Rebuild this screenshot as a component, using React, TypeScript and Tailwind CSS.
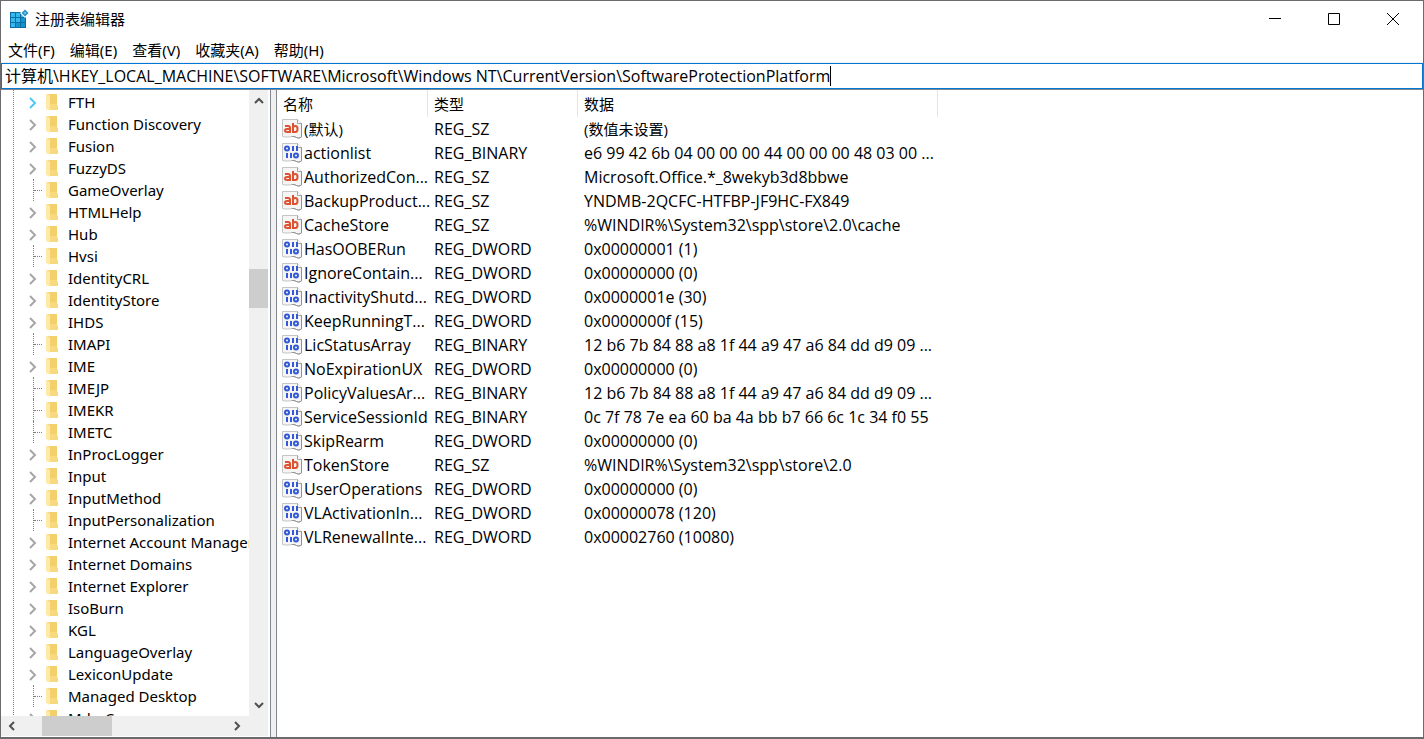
import clsx from "clsx";

type RegKey = { name: string; leaf?: boolean; active?: boolean };
type RegValue = { name: string; type: string; data: string };

const menus = ["文件(F)", "编辑(E)", "查看(V)", "收藏夹(A)", "帮助(H)"];

const keys: RegKey[] = [
  { name: "FTH", active: true },
  { name: "Function Discovery" },
  { name: "Fusion" },
  { name: "FuzzyDS" },
  { name: "GameOverlay", leaf: true },
  { name: "HTMLHelp" },
  { name: "Hub" },
  { name: "Hvsi", leaf: true },
  { name: "IdentityCRL" },
  { name: "IdentityStore" },
  { name: "IHDS" },
  { name: "IMAPI", leaf: true },
  { name: "IME" },
  { name: "IMEJP", leaf: true },
  { name: "IMEKR", leaf: true },
  { name: "IMETC", leaf: true },
  { name: "InProcLogger" },
  { name: "Input" },
  { name: "InputMethod" },
  { name: "InputPersonalization", leaf: true },
  { name: "Internet Account Manager" },
  { name: "Internet Domains" },
  { name: "Internet Explorer" },
  { name: "IsoBurn" },
  { name: "KGL" },
  { name: "LanguageOverlay" },
  { name: "LexiconUpdate" },
  { name: "Managed Desktop", leaf: true },
  { name: "MdmCommon" },
];

const values: RegValue[] = [
  { name: "(默认)", type: "REG_SZ", data: "(数值未设置)" },
  { name: "actionlist", type: "REG_BINARY", data: "e6 99 42 6b 04 00 00 00 44 00 00 00 48 03 00 ..." },
  { name: "AuthorizedCon...", type: "REG_SZ", data: "Microsoft.Office.*_8wekyb3d8bbwe" },
  { name: "BackupProduct...", type: "REG_SZ", data: "YNDMB-2QCFC-HTFBP-JF9HC-FX849" },
  { name: "CacheStore", type: "REG_SZ", data: "%WINDIR%\\System32\\spp\\store\\2.0\\cache" },
  { name: "HasOOBERun", type: "REG_DWORD", data: "0x00000001 (1)" },
  { name: "IgnoreContain...", type: "REG_DWORD", data: "0x00000000 (0)" },
  { name: "InactivityShutd...", type: "REG_DWORD", data: "0x0000001e (30)" },
  { name: "KeepRunningT...", type: "REG_DWORD", data: "0x0000000f (15)" },
  { name: "LicStatusArray", type: "REG_BINARY", data: "12 b6 7b 84 88 a8 1f 44 a9 47 a6 84 dd d9 09 ..." },
  { name: "NoExpirationUX", type: "REG_DWORD", data: "0x00000000 (0)" },
  { name: "PolicyValuesAr...", type: "REG_BINARY", data: "12 b6 7b 84 88 a8 1f 44 a9 47 a6 84 dd d9 09 ..." },
  { name: "ServiceSessionId", type: "REG_BINARY", data: "0c 7f 78 7e ea 60 ba 4a bb b7 66 6c 1c 34 f0 55" },
  { name: "SkipRearm", type: "REG_DWORD", data: "0x00000000 (0)" },
  { name: "TokenStore", type: "REG_SZ", data: "%WINDIR%\\System32\\spp\\store\\2.0" },
  { name: "UserOperations", type: "REG_DWORD", data: "0x00000000 (0)" },
  { name: "VLActivationIn...", type: "REG_DWORD", data: "0x00000078 (120)" },
  { name: "VLRenewalInte...", type: "REG_DWORD", data: "0x00002760 (10080)" },
];

const AppIcon = () => (
  <svg width="20" height="20" viewBox="0 0 20 20" className="shrink-0">
    <path d="M1 3h16v16H1z" fill="#0a6ea6" />
    {[0, 1, 2].map((r) =>
      [0, 1, 2].map((c) => (
        <rect key={`${r}${c}`} x={2 + c * 5} y={4 + r * 5} width="4" height="4" fill={r + c > 2 ? "#1493cf" : "#35b9ec"} />
      )),
    )}
    <path d="M16 -1l5 5-5 5-5-5z" fill="#fff" />
    <path d="M16 0.500l3.500 3.500-3.500 3.500-3.500-3.500z" fill="#2a8fc4" />
    <path d="M16 2.500l1.500 1.500-1.500 1.500-1.500-1.500z" fill="#6cc4ea" />
  </svg>
);

const FolderIcon = () => (
  <svg width="13" height="18" viewBox="0 0 13 18" className="shrink-0">
    <path d="M1 1h10v11l1 1v4H4z" fill="#f7d97f" />
    <path d="M4 1h7v10H4z" fill="#f3d06c" />
    <path d="M0 1l4 2v15L0 16z" fill="#ffe9a6" />
  </svg>
);

const Paper = () => (
  <>
    <path d="M0.500 0.500h15l4 4v13.500q-2.500 2-5 0.500t-4.500-1-5 0.500-4.500-0.500z" fill="#f5f5f5" stroke="#c4c4c4" />
    <path d="M15.500 0.500v4h4" fill="#fff" stroke="#a5a5a5" />
    <path d="M19.500 4.500v13.500q-2.500 2-5 0.500t-4.500-1" fill="none" stroke="#909090" />
  </>
);

const StringIcon = () => (
  <svg width="20" height="20" viewBox="0 0 20 20" className="shrink-0">
    <Paper />
    <g fill="none" stroke="#dd5330" strokeWidth="2">
      <path d="M3 7h3q2 0 2 2v5M8 10H5q-2 0-2 1.500T5 13h3" />
      <path d="M11 4v10M11 8q1-1 2.500-1 2 0 2 3t-2 3H11" />
    </g>
  </svg>
);

const BinaryIcon = () => (
  <svg width="20" height="20" viewBox="0 0 20 20" className="shrink-0">
    <Paper />
    <g fill="none" stroke="#3358d8" strokeWidth="2">
      <circle cx="5" cy="5.500" r="2" />
      <path d="M11 3v5M15 3v5" />
      <path d="M5 10v5M9 10v5" />
      <circle cx="14" cy="12.500" r="2" />
    </g>
  </svg>
);

const chevrons = {
  up: "M2 8l4-4 4 4",
  down: "M2 4l4 4 4-4",
  left: "M8 2L4 6l4 4",
  right: "M4 2l4 4-4 4",
  expand: "M3 1l5 5-5 5",
};

const Chevron = ({ dir }: { dir: keyof typeof chevrons }) => (
  <svg width="12" height="12" viewBox="0 0 12 12" className="shrink-0">
    <path d={chevrons[dir]} fill="none" stroke="currentColor" strokeWidth="2" />
  </svg>
);

const TitleBar = () => (
  <header className="flex h-9 shrink-0 items-center pr-px pl-2">
    <AppIcon />
    <h1 className="flex-1 pl-[6px]">注册表编辑器</h1>
    {["最小化", "最大化", "关闭"].map((label, i) => (
      <button key={label} aria-label={label} className="flex h-9 w-[59px] items-center justify-center">
        <svg width="12" height="12" viewBox="0 0 12 12" fill="none" stroke="#000">
          {i === 0 && <path d="M0 5.500h12" />}
          {i === 1 && <path d="M0.500 0.500h11v11h-11z" />}
          {i === 2 && <path d="M0 0l12 12M12 0L0 12" />}
        </svg>
      </button>
    ))}
  </header>
);

const KeyRow = ({ item }: { item: RegKey }) => (
  <li className="flex h-[22px] items-center pl-[14px] whitespace-nowrap">
    {item.leaf ? (
      <span className="flex h-full w-[19px] shrink-0 items-center pl-[6px]">
        <span className="h-full border-l border-dotted border-[#808080]" />
        <span className="w-2 border-t border-dotted border-[#808080]" />
      </span>
    ) : (
      <button
        aria-label={item.name}
        className={clsx("flex w-[19px] shrink-0 pt-[2px]", item.active ? "text-[#4fc8f5]" : "text-[#a6a6a6]")}
      >
        <Chevron dir="expand" />
      </button>
    )}
    <FolderIcon />
    <span className="pl-[9px]">{item.name}</span>
  </li>
);

const KeyTree = () => (
  <nav className="flex w-[270px] shrink-0 flex-col border-r border-[#828790] bg-white pr-[2px] pb-px">
    <div className="flex min-h-0 flex-1">
      <div className="min-w-0 flex-1 overflow-hidden pl-3">
        <ul className="border-l border-dotted border-[#808080] pt-px [&>li]:-ml-px">
          {keys.map((k) => (
            <KeyRow key={k.name} item={k} />
          ))}
        </ul>
      </div>
      <div className="flex w-[19px] shrink-0 flex-col items-center bg-[#f0f0f0] text-[#505050]">
        <button aria-label="向上" className="flex h-[22px] items-center">
          <Chevron dir="up" />
        </button>
        <div className="flex w-full flex-1 flex-col">
          <div className="basis-[27%]" />
          <div className="h-[39px] bg-[#cdcdcd]" />
        </div>
        <button aria-label="向下" className="flex h-[22px] items-center">
          <Chevron dir="down" />
        </button>
      </div>
    </div>
    <div className="flex h-5 shrink-0 items-center bg-[#f0f0f0] text-[#505050]">
      <button aria-label="向左" className="flex w-[22px] justify-center">
        <Chevron dir="left" />
      </button>
      <div className="flex h-full flex-1 pl-[19px]">
        <div className="w-[70px] bg-[#cdcdcd]" />
      </div>
      <button aria-label="向右" className="flex w-[22px] justify-center">
        <Chevron dir="right" />
      </button>
      <span className="w-5" />
    </div>
  </nav>
);

const ValueTable = () => (
  <main className="min-w-0 flex-1 overflow-hidden border-l border-[#828790] bg-white">
    <table className="w-[661px] table-fixed border-separate border-spacing-0 text-left whitespace-nowrap">
      <colgroup>
        <col className="w-[151px]" />
        <col className="w-[150px]" />
        <col className="w-[360px]" />
      </colgroup>
      <thead>
        <tr className="h-[27px]">
          {["名称", "类型", "数据"].map((h) => (
            <th key={h} className="border-r border-[#e5e5e5] p-0 pl-[6px] font-normal">
              {h}
            </th>
          ))}
        </tr>
      </thead>
      <tbody className="font-['Open_Sans','Noto_Sans_CJK_SC',sans-serif] text-[16px] leading-[22px]">
        {values.map((v, i) => (
          <tr key={v.name} className={clsx("h-6", i === 0 && "text-[15px]")}>
            <td className="p-0 pl-[5px]">
              <div className="flex items-center gap-[2px]">
                {v.type === "REG_SZ" ? <StringIcon /> : <BinaryIcon />}
                {v.name}
              </div>
            </td>
            <td className="p-0 pl-[6px] text-[16px]">{v.type}</td>
            <td className="p-0 pl-[6px]">{v.data}</td>
          </tr>
        ))}
      </tbody>
    </table>
  </main>
);

export default function App() {
  return (
    <div className="flex h-screen flex-col overflow-hidden border border-b-2 border-[#6b6b6f] bg-white font-['Noto_Sans','Noto_Sans_CJK_SC',sans-serif] text-[15px] leading-[22px] text-black">
      <TitleBar />
      <div className="flex h-[25px] shrink-0 items-center gap-[15px] pl-[7px]">
        {menus.map((m) => (
          <button key={m}>{m}</button>
        ))}
      </div>
      <div className="shrink-0 border-b border-[#828790] bg-[#f0f0f0] pt-px">
        <label className="flex h-[26px] items-center border border-[#0078d7] bg-white pl-[3px]">
          <input
            aria-label="地址"
            className="field-sizing-content font-['Open_Sans','Noto_Sans_CJK_SC',sans-serif] text-[16px] leading-[22px] outline-none"
            defaultValue="计算机\HKEY_LOCAL_MACHINE\SOFTWARE\Microsoft\Windows NT\CurrentVersion\SoftwareProtectionPlatform"
          />
          <span className="h-5 w-px bg-black" />
        </label>
      </div>
      <div className="flex min-h-0 flex-1 gap-[5px] bg-[#f0f0f0]">
        <KeyTree />
        <ValueTable />
      </div>
    </div>
  );
}
